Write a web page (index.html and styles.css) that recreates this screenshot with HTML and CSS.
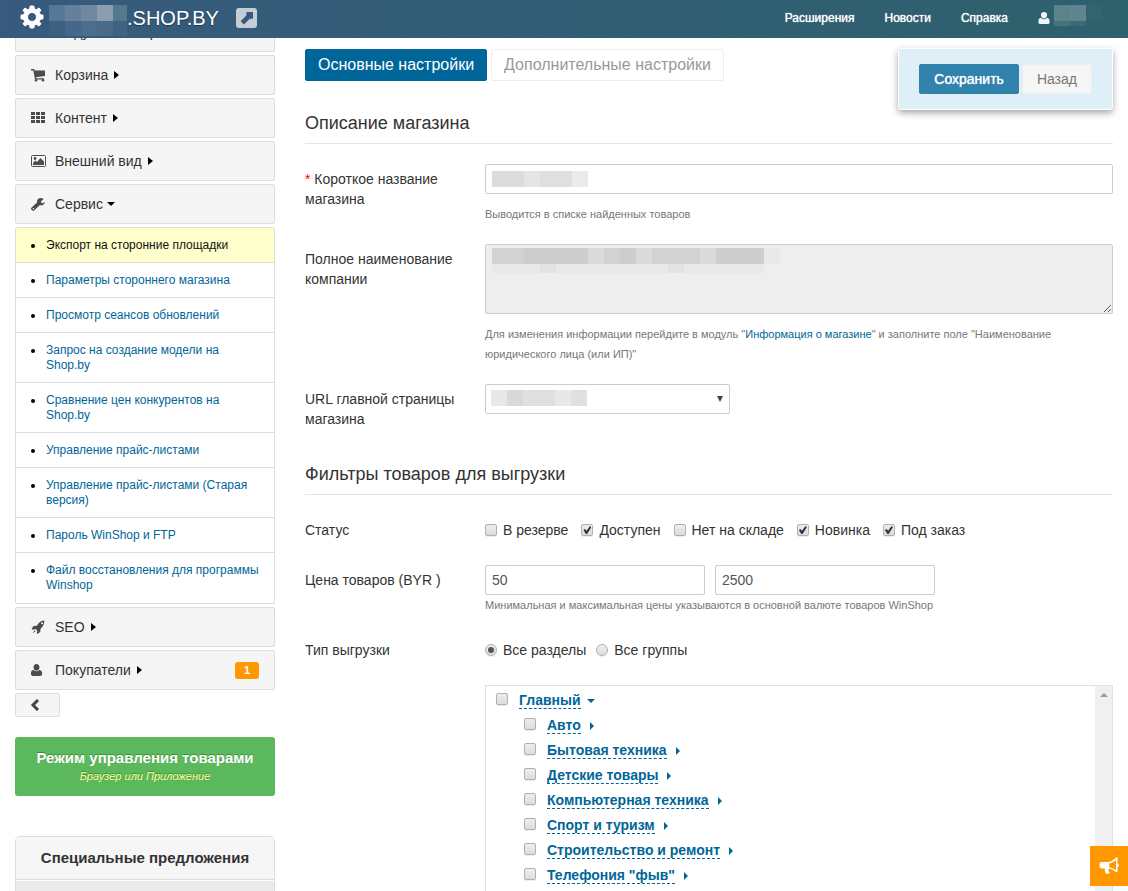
FILE: index.html
```html
<!DOCTYPE html>
<html lang="ru">
<head>
<meta charset="utf-8">
<title>SHOP.BY</title>
<link rel="stylesheet" href="styles.css">
</head>
<body>
<header class="topbar">
  <svg class="gear" width="24" height="24" viewBox="0 0 24 24"><path fill="#fff" fill-rule="evenodd" stroke="#fff" stroke-linejoin="round" d="M10.200 1h3.600l.6 2.900 2 .8 2.500-1.700 2.100 2.100-1.700 2.500.8 2 2.900.6v3.600l-2.900.6-.8 2 1.700 2.500-2.100 2.100-2.500-1.700-2 .8-.6 2.900h-3.600l-.6-2.900-2-.8L5.100 21 3 18.900l1.700-2.500-.8-2L1 13.800v-3.600l2.900-.6.8-2L3 5.100 5.100 3l2.500 1.700 2-.8zM12 7.500a4.500 4.500 0 1 0 0 9 4.500 4.500 0 0 0 0-9z"/></svg>
  <svg class="mosaic" width="78" height="33" viewBox="0 0 78 33" shape-rendering="crispEdges"><path fill="#577796" d="M0 0h16v16H0z"/><path fill="#66809c" d="M16 0h16v16H16z"/><path fill="#6f88a2" d="M32 0h16v16H32z"/><path fill="#8b9eb1" d="M48 0h16v16H48z"/><path fill="#56788e" d="M64 0h14v16H64z"/><path fill="#3c6080" d="M0 16h16v15H0z"/><path fill="#44678a" d="M16 16h16v15H16z"/><path fill="#4c6d8c" d="M32 16h16v15H32z"/><path fill="#496a88" d="M48 16h16v15H48z"/><path fill="#3f647f" d="M64 16h14v15H64z"/></svg>
  <span class="brand">.SHOP.BY</span>
  <a class="open" href="#" aria-label="Открыть магазин"><svg width="21" height="20" viewBox="0 0 21 20"><rect width="21" height="20" rx="3" fill="#c3ced6"/><path fill="#375a7b" d="M7 4h10v10l-3.200-3.200L8 16.600 4.600 13.200l5.800-5.800z"/><path fill="#c3ced6" d="M7 3.800h3.400v3.400L8.500 5.700H7zM17 14v-3.200h-3.200l1.700 1.600V14z"/></svg></a>
  <nav class="topnav">
    <a href="#">Расширения</a>
    <a href="#">Новости</a>
    <a href="#">Справка</a>
    <a class="user" href="#" aria-label="Профиль"><svg width="12" height="12" viewBox="0 0 12 12"><path fill="#f2f5f7" d="M6 0a3 3 0 0 1 3 3.200C9 5 7.800 6.600 6 6.600S3 5 3 3.200A3 3 0 0 1 6 0zM3 5.700c1.800 2 4.200 2 6 0 2 .2 2.600 2 2.600 4.200 0 1.200-.7 2.100-1.900 2.100H2.300C1.100 12 .4 11.100.4 9.900.4 7.700 1 5.900 3 5.700z"/></svg><svg width="48" height="22" viewBox="0 0 48 22" shape-rendering="crispEdges"><path fill="#5a838c" d="M0 0h16v16H0z"/><path fill="#628390" d="M16 0h16v16H16z"/><path fill="#33636d" d="M32 0h16v16H32z"/><path fill="#46737c" d="M0 16h16v5H0z"/><path fill="#3b6a75" d="M16 16h16v5H16z"/></svg></a>
  </nav>
</header>

<div class="page">
  <aside class="sidebar">
    <ul class="menu">
      <li><a class="item" href="#"><svg class="ico" viewBox="0 0 16 16"><path fill="#4c4c4c" d="M0 3h10v8H0zM10 5h4l2 3v3h-6z"/><circle cx="4" cy="12" r="2" fill="#4c4c4c"/><circle cx="12" cy="12" r="2" fill="#4c4c4c"/></svg>Модули и товары</a></li>
      <li><a class="item" href="#"><svg class="ico" viewBox="0 0 16 16"><path fill="#4c4c4c" d="M0 2h3.200l.4 1.500H14v5.500L5 10.200l.2 1H13v1.200H4L2.300 3.400H0z"/><circle cx="5" cy="13.200" r="1.300" fill="#4c4c4c"/><circle cx="12" cy="13.200" r="1.300" fill="#4c4c4c"/></svg>Корзина<i class="caret"></i></a></li>
      <li><a class="item" href="#"><svg class="ico" viewBox="0 0 16 16" shape-rendering="crispEdges"><path fill="#4c4c4c" d="M0 2h4v3H0zM5 2h4v3H5zM10 2h4v3h-4zM0 6h4v3H0zM5 6h4v3H5zM10 6h4v3h-4zM0 10h4v3H0zM5 10h4v3H5zM10 10h4v3h-4z"/></svg>Контент<i class="caret"></i></a></li>
      <li><a class="item" href="#"><svg class="ico" viewBox="0 0 16 16"><rect x=".5" y="2.500" width="14" height="11" rx="1" fill="none" stroke="#4c4c4c"/><circle cx="4" cy="5.500" r="1.400" fill="#4c4c4c"/><path fill="#4c4c4c" d="M2 12V10l2.500-2.500L6 9l3.500-4L13 8.500V12z"/></svg>Внешний вид<i class="caret"></i></a></li>
      <li><a class="item" href="#"><svg class="ico" viewBox="0 0 16 16"><path fill="#4c4c4c" fill-rule="evenodd" d="M12.400 3.600 10.200 5l-.1 1.500 1.300.8 2.300-1.400c.1 2-1.300 3.400-3.200 3.500-.6 0-1-.1-1.500-.3L3.300 14.300a1.500 1.500 0 0 1-2.200 0l-.5-.5a1.500 1.500 0 0 1 0-2.200L6 6.500C5.700 3.800 7.500 2 9.700 2c1 0 1.900.3 2.600.9zM2.300 12a.7.7 0 1 0 0 1.400.7.7 0 0 0 0-1.400z"/></svg>Сервис<i class="caret down"></i></a></li>
      <li>
        <ul class="submenu">
          <li class="active"><a href="#">Экспорт на сторонние площадки</a></li>
          <li><a href="#">Параметры стороннего магазина</a></li>
          <li><a href="#">Просмотр сеансов обновлений</a></li>
          <li><a href="#">Запрос на создание модели на Shop.by</a></li>
          <li><a href="#">Сравнение цен конкурентов на Shop.by</a></li>
          <li><a href="#">Управление прайс-листами</a></li>
          <li><a href="#">Управление прайс-листами (Старая версия)</a></li>
          <li><a href="#">Пароль WinShop и FTP</a></li>
          <li><a href="#">Файл восстановления для программы Winshop</a></li>
        </ul>
      </li>
      <li><a class="item" href="#"><svg class="ico" viewBox="0 0 16 16"><path fill="#4c4c4c" fill-rule="evenodd" d="M13.300 1.500c.1 3.500-1 5.800-3.800 8.300l-.2 3.200-3 2-.6-.7.700-2.400-1.800-1.800-2.400.6L.5 10l2-3 3.200-.2C8 3.200 10.300 1.600 13.300 1.500zm-2.200 1.800a1 1 0 1 0 0 2 1 1 0 0 0 0-2zM3.600 11.200l1 1-3 2z"/></svg>SEO<i class="caret"></i></a></li>
      <li><a class="item" href="#"><svg class="ico" viewBox="0 0 16 16"><path fill="#4c4c4c" d="M5.500 2c1.800 0 3 1.300 3 3.200S7.300 8.600 5.500 8.600s-3-1.500-3-3.400S3.700 2 5.500 2zM2.500 7.900c1.800 1.800 4.200 1.800 6 0 2 .2 2.700 1.800 2.700 3.900 0 1.300-.8 2.200-2 2.200H1.900c-1.200 0-2-.9-2-2.200 0-2.100.6-3.700 2.600-3.900z"/></svg>Покупатели<i class="caret"></i><span class="badge">1</span></a></li>
    </ul>
    <button class="collapse" type="button" aria-label="Свернуть меню"><svg width="10" height="12" viewBox="0 0 10 12"><path fill="none" stroke="#444" stroke-width="3" d="M8 1 3 6l5 5"/></svg></button>
    <a class="mode" href="#"><b>Режим управления товарами</b><em>Браузер или Приложение</em></a>
    <section class="offers"><h3>Специальные предложения</h3><div class="offers-body"></div></section>
  </aside>

  <main class="main">
    <div class="toolbar">
      <div class="tabs">
        <button class="tab current" type="button">Основные настройки</button>
        <button class="tab" type="button">Дополнительные настройки</button>
      </div>
      <div class="actions">
        <button class="save" type="submit" form="settings">Сохранить</button>
        <button class="back" type="button">Назад</button>
      </div>
    </div>

    <form id="settings">
      <h2>Описание магазина</h2>
      <div class="row">
        <label class="label" for="short"><span class="req">*</span> Короткое название магазина</label>
        <div class="field">
          <div class="masked"><input class="text wide" id="short" type="text"><svg class="mask" width="98" height="16" viewBox="0 0 98 16" shape-rendering="crispEdges"><path fill="#dcdcdc" d="M0 0h32v16H0z"/><path fill="#e5e5e5" d="M32 0h16v16H32z"/><path fill="#dfdfdf" d="M48 0h32v16H48z"/><path fill="#ebebeb" d="M80 0h16v16H80z"/></svg></div>
          <p class="help spaced">Выводится в списке найденных товаров</p>
        </div>
      </div>
      <div class="row">
        <label class="label" for="full">Полное наименование компании</label>
        <div class="field">
          <div class="masked"><textarea class="text area" id="full" readonly></textarea><svg class="mask high" width="288" height="25" viewBox="0 0 288 25" shape-rendering="crispEdges"><path fill="#e9e9e9" d="M0 16h272v9H0zM272 0h16v16h-16z"/><path fill="#e3e3e3" d="M48 16h16v9H48zM176 16h16v9h-16z"/><path fill="#d2d2d2" d="M0 0h272v16H0z"/><path fill="#dadada" d="M96 0h16v16H96zM144 0h16v16h-16zM208 0h16v16h-16z"/><path fill="#cdcdcd" d="M32 0h64v16H32zM128 0h16v16h-16zM224 0h48v16h-48z"/></svg></div>
          <p class="help spaced">Для изменения информации перейдите в модуль "<a href="#">Информация о магазине</a>" и заполните поле "Наименование юридического лица (или ИП)"</p>
        </div>
      </div>
      <div class="row">
        <label class="label" for="url">URL главной страницы магазина</label>
        <div class="field">
          <div class="masked pick"><select class="text" id="url"><option></option></select><svg class="mask" width="96" height="16" viewBox="0 0 96 16" shape-rendering="crispEdges"><path fill="#e8e8e8" d="M0 0h16v16H0zM64 0h16v16H64z"/><path fill="#d9d9d9" d="M16 0h16v16H16z"/><path fill="#e0e0e0" d="M32 0h32v16H32zM80 0h16v16H80z"/></svg><i class="arrow"></i></div>
        </div>
      </div>

      <h2 class="next">Фильтры товаров для выгрузки</h2>
      <div class="row">
        <span class="label">Статус</span>
        <div class="field checks">
          <label><input type="checkbox">В резерве</label>
          <label><input type="checkbox" checked>Доступен</label>
          <label><input type="checkbox">Нет на складе</label>
          <label><input type="checkbox" checked>Новинка</label>
          <label><input type="checkbox" checked>Под заказ</label>
        </div>
      </div>
      <div class="row">
        <label class="label" for="min">Цена товаров (BYR )</label>
        <div class="field">
          <div class="prices"><input class="text" id="min" type="text" value="50"><input class="text" type="text" value="2500" aria-label="Максимальная цена"></div>
          <p class="help">Минимальная и максимальная цены указываются в основной валюте товаров WinShop</p>
        </div>
      </div>
      <div class="row">
        <span class="label">Тип выгрузки</span>
        <div class="field checks radios">
          <label><input type="radio" name="kind" checked>Все разделы</label>
          <label><input type="radio" name="kind">Все группы</label>
        </div>
      </div>
      <div class="row">
        <span class="label"></span>
        <div class="field tree">
          <ul class="nodes">
            <li><input type="checkbox" aria-label="Главный"><a href="#">Главный</a><i class="caret down"></i></li>
            <li class="child"><input type="checkbox" aria-label="Авто"><a href="#">Авто</a><i class="caret"></i></li>
            <li class="child"><input type="checkbox" aria-label="Бытовая техника"><a href="#">Бытовая техника</a><i class="caret"></i></li>
            <li class="child"><input type="checkbox" aria-label="Детские товары"><a href="#">Детские товары</a><i class="caret"></i></li>
            <li class="child"><input type="checkbox" aria-label="Компьютерная техника"><a href="#">Компьютерная техника</a><i class="caret"></i></li>
            <li class="child"><input type="checkbox" aria-label="Спорт и туризм"><a href="#">Спорт и туризм</a><i class="caret"></i></li>
            <li class="child"><input type="checkbox" aria-label="Строительство и ремонт"><a href="#">Строительство и ремонт</a><i class="caret"></i></li>
            <li class="child"><input type="checkbox" aria-label="Телефония фыв"><a href="#">Телефония "фыв"</a><i class="caret"></i></li>
          </ul>
          <div class="track"><i class="up"></i></div>
        </div>
      </div>
    </form>
  </main>
</div>

<button class="announce" type="button" aria-label="Объявления"><svg width="20" height="18" viewBox="0 0 20 18"><path fill="#fff" fill-rule="evenodd" d="M17 .5h1.500v6c1 .2 1.400 1 1.400 1.700s-.4 1.500-1.400 1.700V15h-1.600c-2-1.800-4.300-2.900-7.200-3.200-.6.8-.2 1.500.2 2-.3.800.2 1.300.9 2-.9 1.300-3.500 1.200-4.300.4-.5-1.500-1-3-.5-4.700H3c-1 0-2-.6-2.400-1.500V6.700C1 5.500 1.700 5 2.700 5h5.800C11.800 5 14.600 3 17 .5zM17 3c-2.100 1.800-4.300 3-6.700 3.400v4c2.500.3 4.600 1.200 6.700 2.700z"/></svg></button>
</body>
</html>
```

FILE: styles.css
```css
* { box-sizing: border-box; }
body {
  margin: 0;
  background: #fff;
  color: #333;
  font: 14px/20px "Liberation Sans", Arial, sans-serif;
}
ul, p, h2, h3 { margin: 0; padding: 0; }
ul { list-style: none; }
a { color: #069; text-decoration: none; }
button, input, select, textarea { font: inherit; margin: 0; }
button { cursor: pointer; }
svg { display: block; flex: none; }

.topbar {
  position: fixed;
  inset: 0 0 auto;
  z-index: 2;
  display: flex;
  align-items: flex-start;
  height: 38px;
  padding: 5px 26px 0 20px;
  background: linear-gradient(90deg, #375a7d, #2d616c);
}
.gear { margin-right: 5px; }
.brand { color: #fff; font-size: 20px; line-height: 26px; text-shadow: 0 1px 1px #1f3a52; }
.open { margin: 3px 0 0 17px; }
.topnav { display: flex; margin-left: auto; gap: 30px; }
.topnav a { display: flex; color: #fff; font-size: 12px; line-height: 26px; text-shadow: 0 0 1px #fff; }
.topnav .user { gap: 4px; }
.user svg:first-child { margin-top: 7px; }

.page { display: flex; gap: 30px; height: 100vh; overflow: hidden; padding: 12px 15px 0; }
.sidebar { flex: none; width: 260px; }
.menu { display: grid; gap: 3px; }
.item {
  display: flex;
  align-items: center;
  height: 40px;
  padding: 0 15px;
  border: 1px solid #ddd;
  border-radius: 2px;
  background: #f5f5f5;
  color: #333;
}
.ico { width: 16px; height: 16px; margin-right: 8px; }
.caret {
  margin-left: 6px;
  border: 4px solid transparent;
  border-left: 5px solid #000;
  border-right: 0;
}
.caret.down { margin-left: 4px; border: 4px solid transparent; border-top: 4px solid #000; border-bottom: 0; }
.badge {
  margin-left: auto;
  width: 24px;
  border-radius: 3px;
  background: #ff9800;
  color: #fff;
  font-weight: bold;
  font-size: 11px;
  line-height: 17px;
  text-align: center;
}
.submenu {
  border: 1px solid #ddd;
  border-radius: 2px;
  font-size: 12px;
  line-height: 15px;
}
.submenu li { position: relative; padding: 10px 12px 9px 30px; border-bottom: 1px solid #ddd; }
.submenu li:last-child { border-color: transparent; }
.submenu li::before {
  content: "";
  position: absolute;
  left: 15px;
  top: 16px;
  width: 4px;
  height: 4px;
  border-radius: 2px;
  background: #000;
}
.submenu .active { background: #ffc; }
.active a { color: #111; }
.collapse {
  display: block;
  width: 45px;
  height: 24px;
  margin: 3px 0 20px;
  padding: 0 14px;
  border: 1px solid #ddd;
  border-radius: 2px;
  background: #f5f5f5;
}
.mode {
  display: block;
  padding: 11px 0 12px;
  border-radius: 3px;
  background: #5cb85c;
  text-align: center;
  text-shadow: 0 -1px 0 #3d8b3d;
}
.mode b { display: block; color: #fff; font-size: 15px; line-height: 20px; }
.mode em { display: block; color: #ff9; font-size: 11px; line-height: 16px; }
.offers { margin-top: 40px; border: 1px solid #ddd; border-radius: 5px 5px 0 0; }
.offers h3 { padding: 11px 0; background: #f6f6f6; border-bottom: 1px solid #ddd; border-radius: 4px 4px 0 0; font-size: 15px; line-height: 20px; text-align: center; }
.offers-body { height: 60px; border-top: 1px solid #fff; background: #ebebeb; }

.main { flex: 1; min-width: 0; padding-top: 36px; }
.toolbar { display: flex; justify-content: space-between; align-items: flex-start; }
.tabs { display: flex; gap: 4px; padding-top: 1px; }
.tab {
  height: 32px;
  padding: 0 12px;
  border: 1px solid #eee;
  border-radius: 2px;
  background: #fff;
  color: #999;
  font-size: 16px;
}
.tab.current { border-color: #069; background: #069; color: #fff; }
.actions {
  display: flex;
  gap: 3px;
  padding: 15px 20px;
  border: 1px solid #fff;
  border-radius: 3px;
  background: #dfeff8;
  box-shadow: 0 3px 7px rgba(0, 0, 0, .35);
}
.actions button { height: 30px; padding: 0 14px; border: 1px solid #3183ad; border-radius: 2px; }
.actions .save { background: #3183ad; color: #fff; text-shadow: 0 0 1px #fff; }
.actions .back { border-color: #eee; background: #f6f6f6; color: #777; }

h2 {
  margin: 1px 0 20px;
  padding-bottom: 8px;
  border-bottom: 1px solid #e5e5e5;
  font-weight: normal;
  font-size: 18px;
  line-height: 24px;
}
h2.next { margin-top: 33px; }
.row { display: flex; margin-bottom: 20px; }
.label { flex: none; width: 180px; padding: 5px 20px 0 0; }
.req { color: #f00; }
.field { flex: 1; min-width: 0; }
.text {
  display: block;
  height: 30px;
  padding: 4px 6px;
  border: 1px solid #ccc;
  border-radius: 2px;
  background: #fff;
  color: #555;
}
.wide, .area { width: 100%; }
.area { height: 70px; background: #eee; resize: vertical; }
.masked { position: relative; }
.mask { position: absolute; left: 7px; top: 7px; pointer-events: none; }
.mask.high { top: 4px; }
.pick { width: 245px; }
.pick select { width: 100%; appearance: none; }
.pick .mask { left: 6px; top: 6px; }
.arrow {
  position: absolute;
  right: 7px;
  top: 12px;
  border: 3px solid transparent;
  border-top: 6px solid #444;
  border-bottom: 0;
  pointer-events: none;
}
.help { color: #777; font-size: 11px; line-height: 20px; max-width: 590px; }
.spaced { margin-top: 10px; }
.checks { display: flex; flex-wrap: wrap; gap: 13px; padding: 5px 0; }
.radios { gap: 10px; }
.checks label { display: flex; align-items: center; gap: 6px; }
input[type="checkbox"], input[type="radio"] {
  appearance: none;
  flex: none;
  display: grid;
  place-items: center;
  width: 12px;
  height: 12px;
  border: 1px solid #b0b0b0;
  border-radius: 2px;
  background: linear-gradient(#eee, #dcdcdc);
  box-shadow: 0 1px 0 #eee;
}
input[type="radio"] { border-radius: 50%; }
input[type="checkbox"]:checked::before {
  content: "";
  width: 8px;
  height: 8px;
  background: #333640;
  clip-path: polygon(0 50%, 20% 38%, 40% 58%, 82% 0, 100% 16%, 46% 100%, 30% 100%);
}
input[type="radio"]:checked::before { content: ""; width: 6px; height: 6px; border-radius: 50%; background: #555; }
.prices { display: flex; gap: 10px; }
.prices .text { width: 220px; }

.tree { display: flex; height: 320px; border: 1px solid #e1e1e1; }
.nodes { flex: 1; padding: 2px 0 0 10px; }
.nodes li { display: flex; align-items: center; height: 25px; font-weight: bold; }
.nodes .child { padding-left: 28px; }
.nodes input { margin-bottom: 3px; }
.nodes a { margin-left: 11px; line-height: 16px; border-bottom: 1px dashed #069; }
.nodes .caret { border-left-color: #069; border-width: 4px 0 4px 4px; margin-left: 9px; }
.nodes .caret.down { border-color: #069 transparent transparent; border-width: 4px 4px 0; margin-left: 6px; }
.track { flex: none; width: 17px; padding: 7px 0 0 5px; background: #f0f0f0; }
.up { display: block; width: 0; border: 4px solid transparent; border-bottom: 4px solid #999; border-top: 0; }

.announce {
  position: fixed;
  right: 0;
  bottom: 5px;
  display: grid;
  place-items: center;
  width: 38px;
  height: 40px;
  padding: 0;
  border: 0;
  background: #ff9800;
}
```
